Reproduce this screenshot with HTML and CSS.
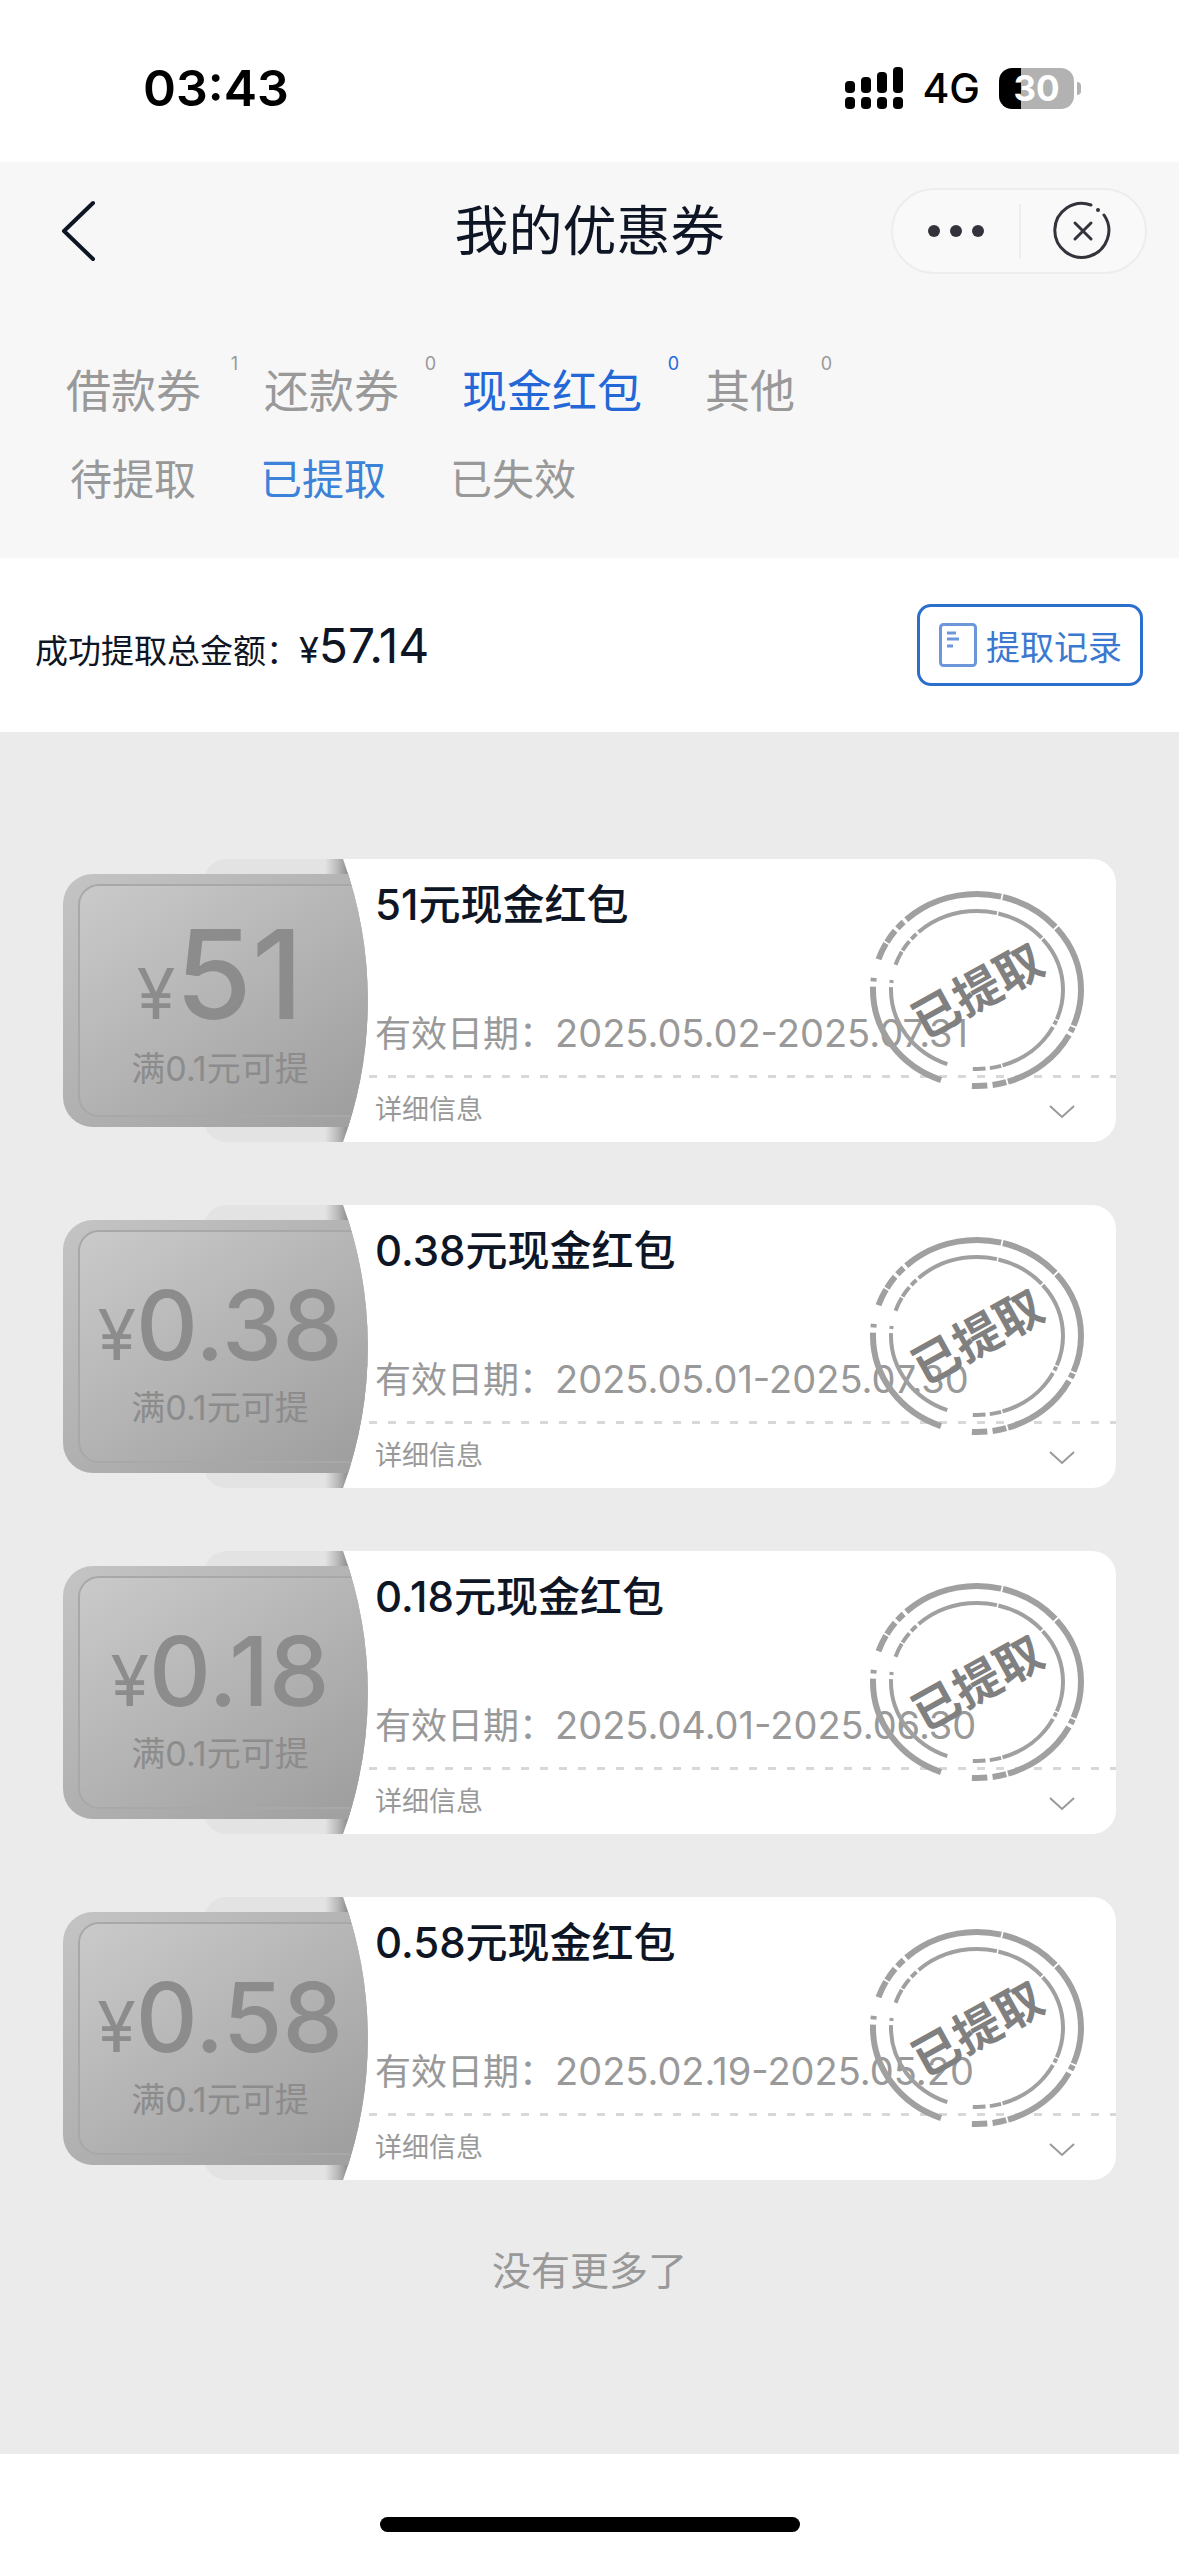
FILE: index.html
```html
<!DOCTYPE html>
<html lang="zh-CN">

<head>
    <meta charset="UTF-8">
    <meta name="viewport" content="width=device-width, initial-scale=1.0">
    <title>我的优惠券</title>

    <link rel="stylesheet" href="styles.css">
</head>

<body>
    <div class="status-bar">
        <span class="time">03:43</span>
        <div class="status-right">
            <svg class="signal" width="58" height="42" viewBox="0 0 58 42" aria-hidden="true">
                <rect x="0" y="14" width="10" height="12" rx="4" />
                <rect x="16" y="10" width="10" height="16" rx="4" />
                <rect x="32" y="5" width="10" height="21" rx="4" />
                <rect x="48" y="0" width="10" height="26" rx="4" />
                <rect x="0" y="30" width="10" height="12" rx="4" />
                <rect x="16" y="30" width="10" height="12" rx="4" />
                <rect x="32" y="30" width="10" height="12" rx="4" />
                <rect x="48" y="30" width="10" height="12" rx="4" />
            </svg>
            <span class="network">4G</span>
            <span class="battery">30</span>
        </div>
    </div>

    <header class="top">
        <div class="nav-bar">
            <button class="back" type="button" aria-label="返回">
                <svg width="36" height="62" viewBox="0 0 36 62" aria-hidden="true">
                    <path d="M33 3 L4 31 L33 59" />
                </svg>
            </button>
            <h1>我的优惠券</h1>
            <div class="capsule">
                <button type="button" aria-label="更多">
                    <svg width="58" height="14" viewBox="0 0 58 14" aria-hidden="true">
                        <circle cx="7" cy="7" r="6" />
                        <circle cx="29" cy="7" r="6" />
                        <circle cx="51" cy="7" r="6" />
                    </svg>
                </button>
                <button type="button" aria-label="关闭">
                    <svg width="60" height="60" viewBox="0 0 60 60" aria-hidden="true">
                        <path class="ring" d="M38 4 A27 27 0 1 0 51 14" />
                        <circle cx="45" cy="9" r="2" />
                        <path class="ring" d="M22 22 L38 38 M38 22 L22 38" />
                    </svg>
                </button>
            </div>
        </div>

        <nav class="tabs">
            <a href="#">借款券<sup>1</sup></a>
            <a href="#">还款券<sup>0</sup></a>
            <a href="#" class="active">现金红包<sup>0</sup></a>
            <a href="#">其他<sup>0</sup></a>
        </nav>
        <nav class="sub-tabs">
            <a href="#">待提取</a>
            <a href="#" class="active">已提取</a>
            <a href="#">已失效</a>
        </nav>
    </header>

    <section class="summary">
        <p>成功提取总金额：<span class="yen">¥</span><span class="sum">57.14</span></p>
        <button class="record" type="button">
            <svg width="38" height="44" viewBox="0 0 38 44" aria-hidden="true">
                <rect x="1.5" y="1.5" width="35" height="41" rx="3" />
                <path d="M8 10 H17 M8 16 H20 M8 23 H14" />
            </svg>
            提取记录
        </button>
    </section>

    <main id="coupon-list"></main>

    <footer>
        <div class="home-indicator"></div>
    </footer>

    <script>
        const coupons = [
            { amount: "51", date: "2025.05.02-2025.07.31" },
            { amount: "0.38", date: "2025.05.01-2025.07.30" },
            { amount: "0.18", date: "2025.04.01-2025.06.30" },
            { amount: "0.58", date: "2025.02.19-2025.05.20" }
        ];

        function renderCoupons() {
            const list = document.getElementById("coupon-list");

            coupons.forEach((coupon, index) => {
                const size = coupon.amount.length > 2 ? "small" : "large";
                const card = document.createElement("article");
                card.className = "coupon";
                card.innerHTML = `
                    <div class="stub">
                        <svg class="stub-bg" viewBox="0 0 306 283" aria-hidden="true">
                            <defs>
                                <linearGradient id="outer-${index}" x1="0" y1="0" x2="1" y2="1">
                                    <stop offset="0" stop-color="#c4c4c4" />
                                    <stop offset="1" stop-color="#9c9c9c" />
                                </linearGradient>
                                <linearGradient id="inner-${index}" x1="0" y1="0" x2="1" y2="1">
                                    <stop offset="0" stop-color="#cacaca" />
                                    <stop offset="1" stop-color="#9a9a9a" />
                                </linearGradient>
                                <linearGradient id="shade-${index}" x1="0" y1="0" x2="1" y2="0">
                                    <stop offset="0" stop-color="#e3e3e3" />
                                    <stop offset="0.5" stop-color="#b8b8b8" />
                                    <stop offset="1" stop-color="#808080" />
                                </linearGradient>
                                <clipPath id="clip-${index}">
                                    <path d="M0 0 H280 A416 416 0 0 1 280 283 H0 Z" />
                                </clipPath>
                            </defs>
                            <rect x="200" width="106" height="283" fill="#fff" />
                            <g clip-path="url(#clip-${index})">
                                <rect x="141" width="200" height="283" rx="22" fill="#e3e3e3" />
                                <rect x="262" width="26" height="283" fill="url(#shade-${index})" />
                                <rect y="15" width="360" height="253" rx="30" fill="url(#outer-${index})" />
                                <rect x="16" y="26" width="340" height="231" rx="20" fill="url(#inner-${index})" stroke="#a8a8a8" stroke-width="2" />
                            </g>
                        </svg>
                        <p class="amount ${size}"><span>¥</span>${coupon.amount}</p>
                        <p class="condition">满0.1元可提</p>
                    </div>
                    <div class="info">
                        <h2>${coupon.amount}元现金红包</h2>
                        <p class="date">有效日期：<span>${coupon.date}</span></p>
                        <button class="detail" type="button">
                            详细信息
                            <svg width="26" height="14" viewBox="0 0 26 14" aria-hidden="true">
                                <path d="M1 1 L13 12 L25 1" />
                            </svg>
                        </button>
                        <svg class="stamp" width="220" height="208" viewBox="0 0 220 208" aria-label="已提取">
                            <ellipse class="outer-ring" cx="111" cy="104" rx="104" ry="96" pathLength="360" />
                            <ellipse class="inner-ring" cx="111" cy="104" rx="86" ry="79" pathLength="360" />
                            <text x="111" y="122" transform="rotate(-29 111 104)">已提取</text>
                        </svg>
                    </div>
                `;
                list.appendChild(card);
            });

            const end = document.createElement("p");
            end.className = "no-more";
            end.textContent = "没有更多了";
            list.appendChild(end);
        }

        renderCoupons();
    </script>
</body>
</html>
```

FILE: styles.css
```css
* {
    margin: 0;
    padding: 0;
    box-sizing: border-box;
}

body {
    min-height: 100vh;
    display: flex;
    flex-direction: column;
    background-color: #fff;
    color: #0e1524;
    font-family: Inter, "Noto Sans CJK SC", sans-serif;
}

button {
    border: none;
    background: none;
    font-family: inherit;
    color: inherit;
    cursor: pointer;
}

a {
    color: inherit;
    text-decoration: none;
}

/* Phone status bar */
.status-bar {
    height: 162px;
    padding: 14px 98px 0 143px;
    display: flex;
    align-items: center;
    justify-content: space-between;
    color: #000;
}

.time {
    font-size: 50px;
    font-weight: 600;
}

.status-right {
    display: flex;
    align-items: center;
    gap: 19px;
}

.network {
    font-size: 41px;
    font-weight: 500;
}

.battery {
    position: relative;
    width: 75px;
    height: 41px;
    margin-right: 7px;
    border-radius: 13px;
    background: linear-gradient(to right, #000 30%, #b2b2b2 30%);
    color: #fff;
    font-size: 35px;
    font-weight: 700;
    line-height: 41px;
    text-align: center;
}

.battery::after {
    content: "";
    position: absolute;
    top: 14px;
    right: -7px;
    width: 4px;
    height: 13px;
    border-radius: 0 4px 4px 0;
    background-color: #b2b2b2;
}

/* Title and tabs */
.top {
    height: 396px;
    background-color: #f7f7f7;
}

.nav-bar {
    height: 137px;
    padding: 0 32px 0 60px;
    display: grid;
    grid-template-columns: 1fr auto 1fr;
    align-items: center;
}

.back {
    justify-self: start;
    height: 62px;
}

.back path {
    fill: none;
    stroke: #0e1524;
    stroke-width: 4;
    stroke-linecap: round;
    stroke-linejoin: round;
}

h1 {
    margin-right: 28px;
    padding-bottom: 6px;
    font-size: 54px;
    font-weight: 400;
}

.capsule {
    justify-self: end;
    width: 256px;
    height: 86px;
    display: grid;
    grid-template-columns: 1fr 1fr;
    border: 2px solid #ededee;
    border-radius: 43px;
    background-color: #f9f9fa;
}

.capsule button {
    display: flex;
    align-items: center;
    justify-content: center;
}

.capsule svg {
    fill: #33333b;
}

.capsule .ring {
    fill: none;
    stroke: #33333b;
    stroke-width: 3;
    stroke-linecap: round;
}

.capsule button + button {
    justify-content: flex-start;
}

.capsule button + button::before {
    content: "";
    width: 2px;
    height: 54px;
    margin-right: 32px;
    background-color: #ededee;
}

.tabs {
    display: flex;
    gap: 26px;
    padding: 60px 66px 0;
    font-size: 45px;
    line-height: 66px;
    color: #999;
}

.tabs a {
    display: flex;
    gap: 24px;
}

.tabs sup {
    min-width: 13px;
    font-size: 18px;
    line-height: 10px;
    text-align: right;
}

.tabs .active {
    color: #2468d8;
}

.sub-tabs {
    display: flex;
    gap: 64px;
    padding: 23px 70px 0;
    font-size: 42px;
    line-height: 64px;
    color: #999;
}

.sub-tabs .active {
    color: #3c82d9;
}

/* Total amount */
.summary {
    height: 174px;
    padding: 0 36px 0 35px;
    display: flex;
    align-items: center;
    justify-content: space-between;
    font-size: 33px;
}

.yen {
    font-size: 36px;
}

.sum {
    font-size: 48px;
}

.record {
    height: 82px;
    padding: 0 18px 0 19px;
    display: flex;
    align-items: center;
    gap: 9px;
    border: 3px solid #2a6fcb;
    border-radius: 14px;
    color: #3b79d0;
    font-size: 34px;
}

.record svg {
    fill: none;
    stroke: #6c97d8;
    stroke-width: 3;
}

/* Coupons */
main {
    flex: 1;
    padding: 127px 63px 0;
    display: flex;
    flex-direction: column;
    gap: 63px;
    background-color: #ebebeb;
}

.coupon {
    height: 283px;
    display: grid;
    grid-template-columns: 306px 1fr;
}

.stub {
    position: relative;
    padding-left: 8px;
    display: flex;
    flex-direction: column;
    align-items: center;
    justify-content: center;
    color: #8c8c8c;
}

.stub-bg {
    position: absolute;
    inset: 0;
}

.amount,
.condition {
    position: relative;
}

.amount {
    font-weight: 500;
}

.amount span {
    font-size: 70px;
    font-weight: 400;
}

.amount.large {
    font-size: 124px;
    line-height: 116px;
}

.amount.small {
    font-size: 96px;
    line-height: 112px;
}

.condition {
    font-size: 34px;
    line-height: 34px;
}

.info {
    position: relative;
    padding-left: 6px;
    border-radius: 0 24px 24px 0;
    background-color: #fff;
}

h2 {
    padding-top: 16px;
    font-size: 42px;
    font-weight: 500;
    line-height: 60px;
}

.date {
    padding-top: 72px;
    color: #999;
    font-size: 36px;
    line-height: 52px;
}

.date span {
    font-size: 38px;
}

/* The dashed line runs back to the edge of the stub */
.detail {
    width: calc(100% + 6px);
    height: 66px;
    margin: 15px 0 0 -6px;
    padding: 0 41px 2px 6px;
    display: flex;
    align-items: center;
    justify-content: space-between;
    color: #999;
    font-size: 27px;
    background: repeating-linear-gradient(to right, #d8d8d8 0 8px, transparent 8px 19px) top / 100% 3px no-repeat;
}

.detail svg {
    margin-top: 10px;
}

.detail path {
    fill: none;
    stroke: #999;
    stroke-width: 2;
}

.stamp {
    position: absolute;
    top: 27px;
    right: 30px;
    pointer-events: none;
}

.stamp ellipse {
    fill: none;
    stroke: #a0a0a0;
    stroke-dasharray: 21 1 3 2 45 1 8 3 9 18 71 3 2 11 10 1 8 2 5 2 58 1 35 1 39 0;
}

.outer-ring {
    stroke-width: 6;
}

.inner-ring {
    stroke-width: 4;
}

.stamp text {
    fill: #808080;
    font-size: 47px;
    font-weight: 700;
    text-anchor: middle;
}

.no-more {
    color: #999;
    font-size: 39px;
    line-height: 56px;
    text-align: center;
}

footer {
    height: 102px;
    padding-top: 63px;
}

.home-indicator {
    width: 420px;
    height: 15px;
    margin: 0 auto;
    border-radius: 8px;
    background-color: #000;
}
```
